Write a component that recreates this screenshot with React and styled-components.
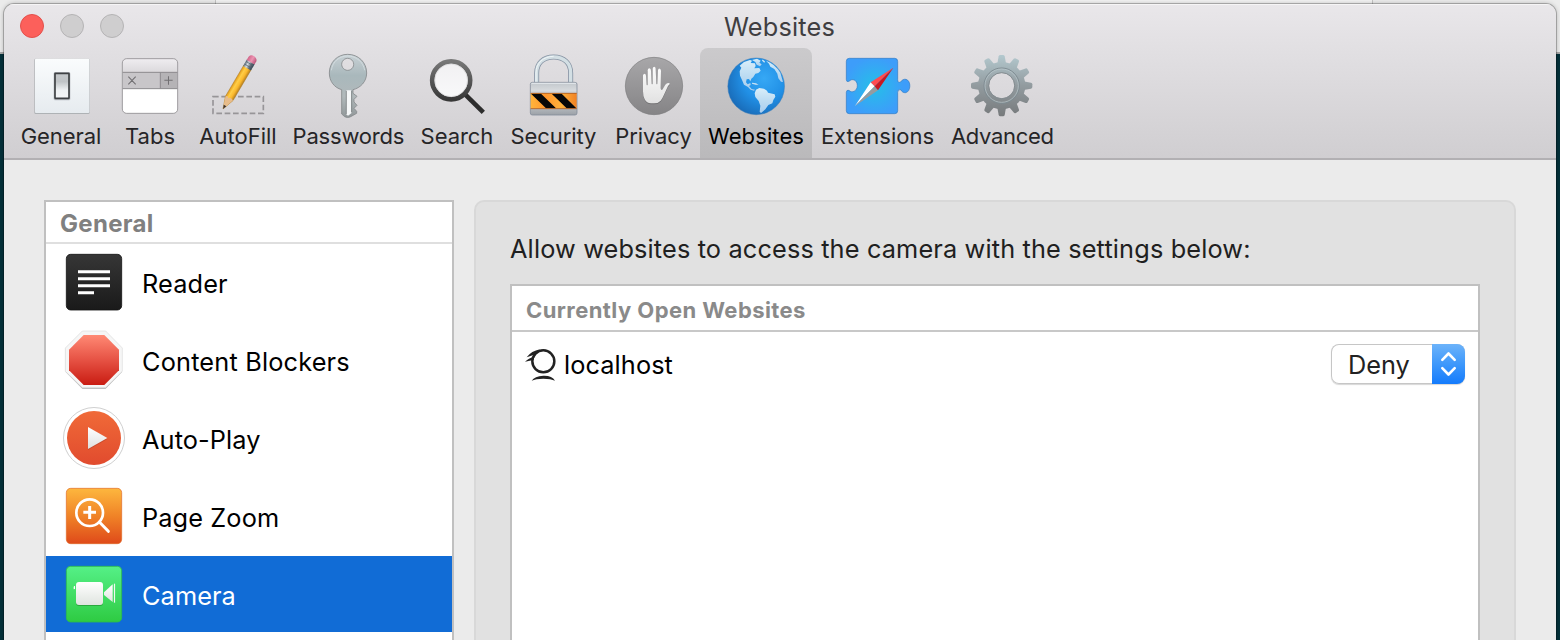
import React from "react";
import styled, { createGlobalStyle } from "styled-components";

const GlobalStyle = createGlobalStyle`
  * { box-sizing: border-box; }
  body { margin: 0; overflow: hidden; font-family: Inter, "Liberation Sans", sans-serif; }
`;

const Desktop = styled.div`
  display: grid;
  height: 640px;
  overflow: hidden;
  background: #04313a;
  > * { grid-area: 1 / 1; }
`;

const Browser = styled.div`
  display: flex;
  height: 54px;
  background: #ececec;
  border-bottom: 2px solid #a9a9a9;
`;

const BrowserTab = styled.div`
  width: ${(p) => p.$width}px;
  background: ${(p) => p.$color};
  border-right: 1px solid #c4c4c4;
`;

const Window = styled.main`
  display: flex;
  flex-direction: column;
  margin: 4px 4px 0;
  height: 700px;
  border-radius: 10px 10px 0 0;
  background: #ebebeb;
  box-shadow: 0 0 0 1px rgba(0, 0, 0, 0.22), 0 0 5px rgba(0, 0, 0, 0.3);
  overflow: hidden;
`;

const Header = styled.header`
  height: 156px;
  flex: none;
  background: linear-gradient(#e9e7ea, #d0ced1);
  border-bottom: 2px solid #b2b0b3;
  box-shadow: inset 0 1px #f6f5f6;
`;

const TitleBar = styled.div`
  display: grid;
  grid-template-columns: 1fr auto 1fr;
  align-items: center;
  height: 44px;
  padding: 0 17px 0 16px;
`;

const Title = styled.h1`
  margin: 0;
  padding-top: 1px;
  font-size: 25.3px;
  font-weight: 400;
  line-height: 43px;
  letter-spacing: ${(p) => p.$track}px;
  color: #403e41;
`;

const Lights = styled.div`
  display: flex;
  gap: 16px;
`;

const Light = styled.span`
  width: 24px;
  height: 24px;
  border-radius: 50%;
  background: ${(p) => (p.$close ? "#fc605b" : "#cfcecf")};
  border: 1px solid ${(p) => (p.$close ? "#e2504c" : "#b4b3b4")};
`;

const Toolbar = styled.nav`
  display: flex;
  padding-left: 11px;
  height: 110px;
`;

const Tool = styled.div`
  display: flex;
  flex-direction: column;
  align-items: center;
  width: ${(p) => p.$width}px;
  padding-top: 6px;
  border-radius: 8px 8px 0 0;
  background: ${(p) => (p.$active ? "linear-gradient(#cbcacc, #bab9bb)" : "none")};
  color: ${(p) => (p.$active ? "#000" : "#262527")};
`;

const ToolLabel = styled.span`
  margin-top: 4px;
  font-size: 22px;
  line-height: 28px;
  letter-spacing: ${(p) => p.$track}px;
  margin-right: ${(p) => -p.$track}px;
  white-space: nowrap;
`;

const Icon = styled.svg`
  width: 64px;
  height: 64px;
  flex: none;
  overflow: visible;
`;

const Content = styled.div`
  display: flex;
  flex: 1;
  gap: 20px;
  padding: 40px 40px 0;
`;

const Sidebar = styled.aside`
  width: 410px;
  flex: none;
  border: 2px solid #c0c0c0;
  background: #fff;
`;

const SidebarHeading = styled.h2`
  margin: 0;
  height: 42px;
  padding-left: 14px;
  border-bottom: 2px solid #dfdfdf;
  font-size: 24px;
  font-weight: 700;
  line-height: 44px;
  letter-spacing: ${(p) => p.$track}px;
  color: #808080;
`;

const SidebarRow = styled.div`
  display: flex;
  align-items: center;
  gap: 16px;
  height: 76px;
  margin-bottom: 2px;
  padding-left: 16px;
  background: ${(p) => (p.$selected ? "#116cd6" : "#fff")};
  color: ${(p) => (p.$selected ? "#fff" : "#000")};
`;

const RowLabel = styled.span`
  font-size: 25.3px;
  line-height: 32px;
  letter-spacing: ${(p) => p.$track}px;
  padding-top: 4px;
`;

const Panel = styled.section`
  flex: 1;
  padding: 30px 34px 0;
  border: 2px solid #d8d8d8;
  border-radius: 10px;
  background: #e1e1e1;
`;

const Description = styled.p`
  margin: 0;
  height: 52px;
  font-size: 25.3px;
  line-height: 34px;
  letter-spacing: ${(p) => p.$track}px;
  color: #202020;
  white-space: nowrap;
`;

const Table = styled.div`
  height: 500px;
  border: 2px solid #c0c0c0;
  background: #fff;
`;

const TableHeading = styled.h3`
  margin: 0;
  height: 46px;
  padding-left: 14px;
  border-bottom: 2px solid #c8c8c8;
  font-size: 22px;
  font-weight: 700;
  line-height: 48px;
  letter-spacing: ${(p) => p.$track}px;
  color: #8a8a8a;
`;

const SiteRow = styled.div`
  display: flex;
  align-items: center;
  height: 64px;
  padding: 0 13px 0 12px;
`;

const SiteIcon = styled.svg`
  width: 34px;
  height: 36px;
  margin-right: 6px;
`;

const SiteName = styled.span`
  flex: 1;
  padding-top: 2px;
  font-size: 25.3px;
  line-height: 32px;
  letter-spacing: ${(p) => p.$track}px;
`;

const Select = styled.button`
  display: flex;
  width: 134px;
  height: 40px;
  padding: 0;
  border: 0;
  border-radius: 8px;
  overflow: hidden;
  background: #fff;
  box-shadow: inset 0 0 0 1px #c6c6c6, 0 1px 1px rgba(0, 0, 0, 0.16);
  font: 25.3px/42px Inter, "Liberation Sans", sans-serif;
  color: #222;
`;

const SelectValue = styled.span`
  flex: 1;
  padding-left: 17px;
  text-align: left;
  letter-spacing: ${(p) => p.$track}px;
`;

const Stepper = styled.span`
  display: flex;
  width: 33px;
  height: 40px;
  background: linear-gradient(#6cb3fa, #3e98fb 50%, #147bfc);
`;

function Gradient({ id, stops, horizontal }) {
  return (
    <linearGradient id={id} x1="0" y1="0" x2={horizontal ? 1 : 0} y2={horizontal ? 0 : 1}>
      {stops.map((c, i) => (
        <stop key={i} offset={i / (stops.length - 1)} stopColor={c} />
      ))}
    </linearGradient>
  );
}

const GeneralIcon = () => (
  <Icon viewBox="87 162 192 192">
    <Gradient id="plate" stops={["#fafcfd", "#e6ebef"]} />
    <Gradient id="switch" stops={["#c4c8cb", "#c0c4c7", "#eef1f3", "#f4f6f8"]} />
    <rect x="103" y="176" width="166" height="166" rx="4" fill="#aeb2b5" />
    <rect x="105" y="176" width="163" height="163" rx="3" fill="url(#plate)" />
    <rect x="161" y="217" width="50" height="84" rx="4" fill="#b9bdc2" />
    <rect x="165" y="220" width="42" height="75" rx="1" fill="url(#switch)" stroke="#3e4144" strokeWidth="5" />
  </Icon>
);

const TabsIcon = () => (
  <Icon viewBox="354 162 192 192">
    <Gradient id="tabTop" stops={["#efedf0", "#dbd9dc"]} />
    <clipPath id="tabClip"><rect x="367" y="176" width="166" height="164" rx="13" /></clipPath>
    <g clipPath="url(#tabClip)">
      <rect x="367" y="176" width="166" height="164" fill="#fff" />
      <rect x="367" y="176" width="166" height="41" fill="url(#tabTop)" />
      <rect x="367" y="216" width="166" height="50" fill="#c8c6c9" />
      <rect x="481" y="216" width="52" height="50" fill="#b5b3b6" />
      <path d="M367 217H533M367 266H533M481 217V266" stroke="#8d8b8e" strokeWidth="3" />
    </g>
    <rect x="367" y="176" width="166" height="164" rx="13" fill="none" stroke="#908e91" strokeWidth="2.500" />
    <path d="M385 230L407 253M407 230L385 253M493 241H518M505.500 229V254" stroke="#727073" strokeWidth="3.200" />
  </Icon>
);

const AutoFillIcon = () => (
  <Icon viewBox="618 162 192 192">
    <Gradient id="pencil" horizontal stops={["#e39a16", "#ffce48", "#fbb92e", "#b77e1c"]} />
    <Gradient id="ferrule" horizontal stops={["#596876", "#d6dee3", "#66717b", "#344352"]} />
    <Gradient id="eraser" horizontal stops={["#d16489", "#ec94b2", "#b95379"]} />
    <rect x="639" y="290" width="151" height="50" fill="none" stroke="#979598" strokeWidth="5" strokeDasharray="17 8" />
    <g transform="translate(669 327) rotate(30.500)">
      <path d="M0 0L-13-37V-145H13V-37Z" fill="url(#pencil)" stroke="#a97720" strokeWidth="1.500" />
      <path d="M0 0L-13-37Q-7-44-3-36Q2-44 13-37Z" fill="#e7bc8b" />
      <path d="M0 0L-4.500-12L4.500-12Z" fill="#38312e" />
      <rect x="-13.500" y="-164" width="27" height="22" fill="url(#ferrule)" />
      <path d="M-13-158H13M-13-149H13" stroke="#4f5f6d" strokeWidth="2" />
      <path d="M-13.500-163V-174Q-11-184 0-184T13.500-174V-163Z" fill="url(#eraser)" />
    </g>
  </Icon>
);

const PasswordsIcon = () => (
  <Icon viewBox="96 27 192 192">
    <Gradient id="key" stops={["#c8d1d5", "#a9b8bc", "#b1b9bb", "#919799"]} />
    <path
      fillRule="evenodd"
      d="M188 28C220 28 245 52 245 84C245 110 226 129 204 134V145L216 154L207 163V171L216 181L207 190L215 199V205L197 215Q188 220 179 215L170 207V134C148 128 133 109 133 84C133 52 157 28 188 28ZM188 40a18 18 0 1 0 .1 0Z"
      fill="url(#key)"
      stroke="#85898b"
      strokeWidth="2.500"
    />
    <path d="M139 76C143 49 163 33 188 33C215 33 235 52 239 76" fill="none" stroke="#dce4e7" strokeWidth="2" />
    <path d="M183 136H199V205L189 212L183 207Z" fill="#f5f7f8" />
    <path d="M184 137V207M200 137V201" stroke="#767b7d" strokeWidth="2.500" />
  </Icon>
);

const SearchIcon = () => (
  <Icon viewBox="420 27 192 192">
    <Gradient id="lens" stops={["#f1f0f2", "#f9f9fa"]} />
    <Gradient id="rim" stops={["#777", "#383838"]} />
    <path d="M541 149L595 202" stroke="#2d2d2d" strokeWidth="14" />
    <circle cx="498.500" cy="106" r="57" fill="url(#lens)" stroke="url(#rim)" strokeWidth="14" />
    <circle cx="498.500" cy="106" r="49" fill="none" stroke="#d5d4d6" strokeWidth="2" />
  </Icon>
);

const SecurityIcon = () => (
  <Icon viewBox="66 27 192 192">
    <Gradient id="lock" stops={["#c1c6cb", "#d7dadd", "#a8adb2", "#b8bdc2", "#9ca1a7"]} />
    <Gradient id="hazard" horizontal stops={["#ffb43c", "#ff962d", "#ffb13b", "#f18224"]} />
    <path d="M110 113V84C110 54 130 36 161 36S212 54 212 84V113" fill="none" stroke="#8794a4" strokeWidth="15" />
    <path d="M110 113V84C110 54 130 36 161 36S212 54 212 84V113" fill="none" stroke="#d3dfe4" strokeWidth="10" />
    <path d="M108 113V84C108 54 130 34 161 34" fill="none" stroke="#eff5f7" strokeWidth="3" />
    <rect x="91" y="112" width="140" height="98" rx="6" fill="url(#lock)" stroke="#858e9b" strokeWidth="2.500" />
    <path d="M94 115H228" stroke="#e5eaed" strokeWidth="3" />
    <rect x="92" y="144" width="138" height="47" fill="url(#hazard)" />
    <path d="M93 146H123L168 190H138ZM155 146H185L229 190H200Z" fill="#070707" />
    <path d="M92 145H230M92 191H230" stroke="#a85e27" strokeWidth="2.500" />
  </Icon>
);

const HAND =
  "M429 91Q430 86 434 86Q438 87 438 92L440 119Q441 123 443 119V76Q444 70 448 70Q453 71 453 77L455 116Q456 120 458 116V71Q459 65 463 65Q467 66 467 71L469 116Q471 120 472 116L474 76Q475 70 479 71Q483 72 483 77L482 130Q483 138 487 134L496 119Q502 111 509 115Q510 118 504 123L493 147Q487 161 482 167Q475 175 462 175H453Q440 175 434 163Q429 153 429 139Z";

const PrivacyIcon = () => (
  <Icon viewBox="366 27 192 192">
    <Gradient id="disc" stops={["#a8a7a9", "#858486"]} />
    <Gradient id="hand" stops={["#fdfdfd", "#e1e1e1"]} />
    <circle cx="462" cy="123" r="86" fill="url(#disc)" stroke="#7c7b7d" strokeWidth="2" />
    <path d={HAND} transform="translate(0 3)" fill="#737274" />
    <path d={HAND} fill="url(#hand)" />
  </Icon>
);

const WebsitesIcon = () => (
  <Icon viewBox="0 0 192 192">
    <radialGradient id="ocean" cx=".64" cy=".36" r=".75">
      <stop offset="0" stopColor="#36a8f5" />
      <stop offset=".5" stopColor="#2190e6" />
      <stop offset="1" stopColor="#1866b1" />
    </radialGradient>
    <Gradient id="land" stops={["#d9eefa", "#bddcf2", "#a9cdee"]} />
    <circle cx="96.500" cy="97" r="85" fill="url(#ocean)" stroke="#3f7fb8" strokeWidth="1.500" />
    <g fill="url(#land)">
      <path d="M47 35L60 24L78 18L84 20L80 27L93 28L95 36L91 43L106 42L110 50L103 57L94 59L88 69L82 74L79 82L75 75L68 76L66 85L71 91L79 87L80 93L75 96L83 105L93 107L90 110L80 107L72 99L60 92L54 78L48 65L47 52L52 41Z" />
      <path d="M84 18L99 14L110 20L106 26L113 31L108 37L98 32L94 24Z" />
      <path d="M126 20Q152 29 169 56L177 84L171 83L163 73L160 59L151 45L139 38L135 29Z" />
      <path d="M96 107L106 102L120 104L129 110L132 116L152 121L154 128L148 138L145 148L133 153L124 166L111 177L107 173L109 155L104 141L94 129L92 118Z" />
      <path d="M84 86L96 88L104 92L96 93L84 89Z" />
    </g>
    <path d="M115 18L122 25" stroke="#cae5f7" strokeWidth="4" />
  </Icon>
);

const PUZZLE =
  "M463 175H599Q608 175 608 184V239Q608 250 617 246C621 239 627 237 633 238C649 242 648 275 632 278C626 279 620 275 617 269Q608 267 608 277V332Q608 341 599 341H463Q454 341 454 332V277Q454 269 462 271C470 281 487 273 487 257C487 239 471 234 462 244Q454 247 454 239V184Q454 175 463 175Z";

const ExtensionsIcon = () => (
  <Icon viewBox="453 162 192 192">
    <radialGradient id="puzzle" gradientUnits="userSpaceOnUse" cx="538" cy="259" r="88">
      <stop offset="0" stopColor="#25bfe8" />
      <stop offset="1" stopColor="#3d9dfa" />
    </radialGradient>
    <path d={PUZZLE} fill="url(#puzzle)" stroke="#2f78c2" strokeWidth="2" />
    <path d="M480 318L527 247L539 259Z" fill="#fff" />
    <path d="M480 318L539 259L549 271Z" fill="#969b9f" />
    <path d="M595 203L527 247L539 259Z" fill="#ff4b50" />
    <path d="M595 203L539 259L549 271Z" fill="#ca1822" />
  </Icon>
);

const AdvancedIcon = () => (
  <Icon viewBox="93 27 192 192">
    <linearGradient id="gear" gradientUnits="userSpaceOnUse" x1="0" y1="31" x2="0" y2="213">
      <stop stopColor="#b3c8ce" />
      <stop offset=".5" stopColor="#929b9f" />
      <stop offset="1" stopColor="#777a7c" />
    </linearGradient>
    <mask id="gearMask">
      <circle cx="185" cy="122" r="71" fill="#fff" />
      {Array.from({ length: 12 }, (_, i) => (
        <path key={i} d="M171 61L176 34Q177 30 181 30H189Q193 30 194 34L199 61Z" fill="#fff" transform={`rotate(${i * 30} 185 122)`} />
      ))}
      <circle cx="185" cy="122" r="38" fill="#000" />
    </mask>
    <rect x="90" y="28" width="190" height="190" fill="url(#gear)" mask="url(#gearMask)" />
    <circle cx="185" cy="122" r="53" fill="none" stroke="#7e8b91" strokeWidth="3" />
    <circle cx="185" cy="122" r="50" fill="none" stroke="#bbc8cd" strokeWidth="2" />
    <circle cx="185" cy="122" r="39" fill="none" stroke="#848c90" strokeWidth="3" />
  </Icon>
);

const ReaderIcon = () => (
  <Icon viewBox="66 165 192 192">
    <Gradient id="reader" stops={["#363636", "#1a1a1a"]} />
    <rect x="79" y="178" width="166" height="167" rx="13" fill="url(#reader)" stroke="#151515" strokeWidth="2.500" />
    <path d="M114 230H210M114 251H210M114 272H210M114 293H162" stroke="#fff" strokeWidth="9" />
  </Icon>
);

const BlockersIcon = () => (
  <Icon viewBox="66 399 192 192">
    <Gradient id="stop" stops={["#ff8974", "#e65244", "#c91c12"]} />
    <path d="M127 411H197L246 461V531L197 581H127L77 531V461Z" fill="#a9a9a9" />
    <path d="M127 408H197L247 459V529L197 578H127L76 529V459Z" fill="#f6f6f6" stroke="#dcdcdc" strokeWidth="2" />
    <path d="M131 420H193L237 464V526L193 570H131L87 526V464Z" fill="url(#stop)" />
  </Icon>
);

const AutoPlayIcon = () => (
  <Icon viewBox="66 33 192 192">
    <Gradient id="play" stops={["#f06a38", "#e14b2e"]} />
    <Gradient id="arrow" stops={["#fff", "#dfdfdf"]} />
    <circle cx="162" cy="129" r="91.500" fill="#fff" stroke="#c5c5c5" strokeWidth="2.500" />
    <circle cx="162" cy="129" r="81" fill="url(#play)" />
    <path d="M144 98L202 132L144 165Z" fill="#a93b25" opacity=".5" />
    <path d="M144 96L202 129L144 162Z" fill="url(#arrow)" />
  </Icon>
);

const ZoomIcon = () => (
  <Icon viewBox="66 267 192 192">
    <Gradient id="zoom" stops={["#fdb73e", "#f08327", "#df4a1a"]} />
    <rect x="79" y="280" width="166" height="166" rx="13" fill="url(#zoom)" stroke="#df6721" strokeWidth="2" />
    <circle cx="149" cy="353" r="40" fill="none" stroke="#fff" strokeWidth="8" />
    <path d="M178 381L205 409" stroke="#fff" strokeWidth="9" strokeLinecap="round" />
    <path d="M130 352H168M149 333V372" stroke="#fff" strokeWidth="9" />
  </Icon>
);

const CameraIcon = () => (
  <Icon viewBox="66 501 192 192">
    <Gradient id="cameraTile" stops={["#55f087", "#2ecb42"]} />
    <Gradient id="camera" stops={["#fff", "#dfe4df"]} />
    <rect x="79" y="514" width="166" height="167" rx="13" fill="url(#cameraTile)" stroke="#2ebb4c" strokeWidth="2.500" />
    <rect x="108" y="564" width="81" height="69" rx="9" fill="#29a93d" />
    <rect x="108" y="561" width="81" height="69" rx="9" fill="url(#camera)" />
    <path d="M192 592L218 568V621L192 600Z" fill="url(#camera)" />
    <path d="M223.500 566V623" stroke="#f2f6f2" strokeWidth="3.500" />
    <path d="M101 583V576Q101 573 104 573H105V582Z" fill="#fff" />
  </Icon>
);

const tools = [
  { label: "General", width: 92, track: -0.05, icon: GeneralIcon },
  { label: "Tabs", width: 86, track: 0, icon: TabsIcon },
  { label: "AutoFill", width: 90, track: 0, icon: AutoFillIcon },
  { label: "Passwords", width: 131, track: -0.2, icon: PasswordsIcon },
  { label: "Search", width: 86, track: -0.05, icon: SearchIcon },
  { label: "Security", width: 107, track: -0.1, icon: SecurityIcon },
  { label: "Privacy", width: 93, track: -0.1, icon: PrivacyIcon },
  { label: "Websites", width: 112, track: 0.1, icon: WebsitesIcon, active: true },
  { label: "Extensions", width: 131, track: 0, icon: ExtensionsIcon },
  { label: "Advanced", width: 119, track: -0.3, icon: AdvancedIcon },
];

const sections = [
  { label: "Reader", track: 0.15, icon: ReaderIcon },
  { label: "Content Blockers", track: 0.18, icon: BlockersIcon },
  { label: "Auto-Play", track: 0.12, icon: AutoPlayIcon },
  { label: "Page Zoom", track: 0.12, icon: ZoomIcon },
  { label: "Camera", track: 0.1, icon: CameraIcon, selected: true },
];

export default function App() {
  return (
    <>
      <GlobalStyle />
      <Desktop>
        <Browser>
          <BrowserTab $width={216} $color="#ebebeb" />
          <BrowserTab $width={1157} $color="#f3f3f3" />
        </Browser>
        <Window>
          <Header>
            <TitleBar>
              <Lights>
                <Light $close />
                <Light />
                <Light />
              </Lights>
              <Title $track={0.2}>Websites</Title>
            </TitleBar>
            <Toolbar>
              {tools.map(({ label, width, track, icon: Glyph, active }) => (
                <Tool key={label} $width={width} $active={active}>
                  <Glyph />
                  <ToolLabel $track={track}>{label}</ToolLabel>
                </Tool>
              ))}
            </Toolbar>
          </Header>
          <Content>
            <Sidebar>
              <SidebarHeading $track={0.3}>General</SidebarHeading>
              {sections.map(({ label, track, icon: Glyph, selected }) => (
                <SidebarRow key={label} $selected={selected}>
                  <Glyph />
                  <RowLabel $track={track}>{label}</RowLabel>
                </SidebarRow>
              ))}
            </Sidebar>
            <Panel>
              <Description $track={0.15}>Allow websites to access the camera with the settings below:</Description>
              <Table>
                <TableHeading $track={0.42}>Currently Open Websites</TableHeading>
                <SiteRow>
                  <SiteIcon viewBox="252 453 102 108">
                    <circle cx="310" cy="499" r="33" fill="none" stroke="#222" strokeWidth="7.500" />
                    <path d="M300 463Q274 468 260 487L287 478ZM284 485Q267 488 255 500L280 495Z" fill="#222" />
                    <path d="M275 557Q284 543 310 542T345 557Q333 551 310 551T275 557Z" fill="#222" />
                  </SiteIcon>
                  <SiteName $track={0.1}>localhost</SiteName>
                  <Select>
                    <SelectValue $track={0}>Deny</SelectValue>
                    <Stepper>
                      <svg width="33" height="40" viewBox="0 0 33 40" fill="none" stroke="#fff" strokeWidth="2.600" strokeLinecap="round" strokeLinejoin="round">
                        <path d="M10.300 15.800L16.500 9.500L22.700 15.800M10.300 24.200L16.500 30.500L22.700 24.200" />
                      </svg>
                    </Stepper>
                  </Select>
                </SiteRow>
              </Table>
            </Panel>
          </Content>
        </Window>
      </Desktop>
    </>
  );
}
